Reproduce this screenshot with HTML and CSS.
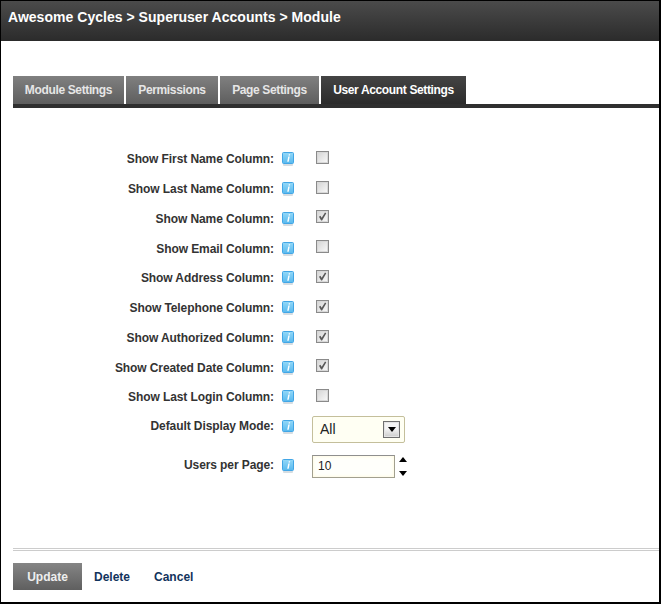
FILE: index.html
```html
<!DOCTYPE html>
<html lang="en">
<head>
<meta charset="utf-8">
<title>Module</title>
<link rel="stylesheet" href="styles.css">
</head>
<body>
<div class="frame">
  <svg width="0" height="0" class="defs">
    <defs>
      <linearGradient id="hg" x1="0" y1="0" x2="0" y2="1"><stop offset="0" stop-color="#93d8f8"/><stop offset="1" stop-color="#58b9ee"/></linearGradient>
      <symbol id="help" viewBox="0 0 12 14">
        <rect x="1" y="11.5" width="10" height="2.5" rx="1" fill="#d6dde2"/>
        <rect x=".5" y=".5" width="11" height="11" rx="1" fill="url(#hg)" stroke="#42a6e6"/>
        <path d="M6.8 2.2h1.4l-.3 1.3H6.5zM6.3 4.5h1.4l-1 5.2H5.2z" fill="#fff"/>
      </symbol>
      <symbol id="check" viewBox="0 0 11 11">
        <path d="M2 5.8l1.4-1 1.3 2L8 1.4l1.3.8-4.2 7.3H4.1z" fill="#585858"/>
      </symbol>
    </defs>
  </svg>
  <header class="top"><h1 class="crumb">Awesome Cycles &gt; Superuser Accounts &gt; Module</h1></header>
  <nav class="tabs">
    <a class="tab t1">Module Settings</a>
    <a class="tab t2">Permissions</a>
    <a class="tab t3">Page Settings</a>
    <a class="tab t4 active">User Account Settings</a>
  </nav>
  <main class="form">
    <div class="row"><label class="lbl">Show First Name Column:</label><svg class="help"><use href="#help"/></svg><span class="cb"></span></div>
    <div class="row"><label class="lbl">Show Last Name Column:</label><svg class="help"><use href="#help"/></svg><span class="cb"></span></div>
    <div class="row"><label class="lbl">Show Name Column:</label><svg class="help"><use href="#help"/></svg><span class="cb"><svg class="tick"><use href="#check"/></svg></span></div>
    <div class="row"><label class="lbl">Show Email Column:</label><svg class="help"><use href="#help"/></svg><span class="cb"></span></div>
    <div class="row"><label class="lbl">Show Address Column:</label><svg class="help"><use href="#help"/></svg><span class="cb"><svg class="tick"><use href="#check"/></svg></span></div>
    <div class="row"><label class="lbl">Show Telephone Column:</label><svg class="help"><use href="#help"/></svg><span class="cb"><svg class="tick"><use href="#check"/></svg></span></div>
    <div class="row"><label class="lbl">Show Authorized Column:</label><svg class="help"><use href="#help"/></svg><span class="cb"><svg class="tick"><use href="#check"/></svg></span></div>
    <div class="row"><label class="lbl">Show Created Date Column:</label><svg class="help"><use href="#help"/></svg><span class="cb"><svg class="tick"><use href="#check"/></svg></span></div>
    <div class="row"><label class="lbl">Show Last Login Column:</label><svg class="help"><use href="#help"/></svg><span class="cb"></span></div>
    <div class="row row-select"><label class="lbl">Default Display Mode:</label><svg class="help"><use href="#help"/></svg>
      <div class="select"><span class="sel-val">All</span><span class="sel-btn"><span class="arrow-down"></span></span></div>
    </div>
    <div class="row row-input"><label class="lbl">Users per Page:</label><svg class="help"><use href="#help"/></svg>
      <div class="num"><span class="num-val">10</span></div>
      <div class="spin"><span class="arrow-up"></span><span class="arrow-down"></span></div>
    </div>
  </main>
  <footer class="foot">
    <div class="rule"></div>
    <div class="actions">
      <a class="btn">Update</a>
      <a class="link l1">Delete</a>
      <a class="link l2">Cancel</a>
    </div>
  </footer>
</div>
</body>
</html>
```
FILE: styles.css
```css
* { box-sizing: border-box; }
html, body { margin: 0; padding: 0; height: 100%; background: #fff; overflow: hidden; }
body { font-family: "Liberation Sans", Arial, sans-serif; }
.defs { position: absolute; }
.frame {
  width: 661px; height: 604px;
  border: 1px solid #000; border-width: 1px 2px 2px 1px;
  display: flex; flex-direction: column;
}
.top {
  height: 40px; flex: none;
  background: linear-gradient(#4b4b4b, #2b2b2b);
  padding: 8px 0 0 7px;
}
.crumb { margin: 0; font-size: 14px; line-height: 17px; font-weight: bold; color: #fff; letter-spacing: .03px; }
.tabs {
  display: flex; gap: 2px;
  margin: 35px 0 0 12px; height: 32px; flex: none;
  border-bottom: 4px solid #2f2f2f;
}
.tab {
  height: 28px; padding-top: 6px;
  font-size: 12px; line-height: 16px; font-weight: bold; text-align: center;
  letter-spacing: -.36px;
  color: #e6e6e6;
  background: linear-gradient(#808080, #5e5e5e);
}
.t1 { width: 111px; }
.t2 { width: 92px; }
.t3 { width: 99px; }
.t4 { width: 145px; }
.tab.active { background: linear-gradient(#444, #2b2b2b); color: #fff; }
.form { padding-top: 36.25px; flex: 1; }
.row { display: flex; height: 29.766px; align-items: flex-start; }
.lbl {
  width: 273px; flex: none; text-align: right;
  font-size: 12px; line-height: 16px; font-weight: bold; color: #333;
  letter-spacing: -.09px;
  padding-top: 7px;
}
.help { width: 12px; height: 14px; margin: 8px 0 0 8px; flex: none; }
.cb {
  width: 13px; height: 13px; margin: 6.69px 0 0 22px; flex: none;
  border: 1px solid #8a8a8a;
  background: linear-gradient(135deg, #d4d4d4, #fafafa);
  box-shadow: inset 0 0 0 1px #d8d8d8;
  display: block;
}
.tick { width: 11px; height: 11px; display: block; }
.row-select { height: 44px; margin-top: -1.14px; }
.row-select .help { margin-top: 9px; }
.select {
  width: 93px; height: 27px; margin: 5px 0 0 18px;
  border: 1px solid #c4bf9b; border-radius: 2px;
  background: #fffff3;
  display: flex; align-items: center; justify-content: space-between;
  padding: 0 4px 0 7px;
}
.sel-val { font-size: 14px; color: #222; padding-bottom: 2px; }
.sel-btn {
  width: 17px; height: 17px; border: 1px solid #6f6f6f;
  box-shadow: inset 0 0 0 1px #e4e4e4;
  background: linear-gradient(#f4f4f4 45%, #cbcbcb);
  display: flex; justify-content: center; padding-top: 5px;
}
.arrow-down { width: 0; height: 0; border: 4px solid transparent; border-top: 5px solid #000; border-bottom: 0; }
.arrow-up { width: 0; height: 0; border: 4px solid transparent; border-bottom: 5px solid #000; border-top: 0; }
.row-input .lbl { padding-top: 2px; }
.row-input .help { margin-top: 4px; }
.num {
  width: 83px; height: 23px; margin: 0 0 0 18px;
  border: 1px solid #a2a08f; border-top-color: #8f8f8f;
  background: #fffffb;
  box-shadow: inset 0 0 3px 1px #fffbe4;
  padding: 3px 0 0 5px;
}
.num-val { font-size: 12px; line-height: 15px; display: block; color: #222; }
.spin { display: flex; flex-direction: column; gap: 9px; margin: 0 0 0 4px; width: 8px; height: 21px; padding-top: 2px; }
.foot { flex: none; padding: 0 0 12px 12px; }
.rule { height: 3px; border-top: 1px solid #ccc; border-bottom: 1px solid #ccc; }
.actions { display: flex; align-items: center; margin-top: 12px; height: 27px; }
.btn {
  width: 69px; height: 27px; padding-top: 6px;
  text-align: center; font-size: 12px; line-height: 16px; font-weight: bold; color: #eee;
  background: linear-gradient(#858585, #5f5f5f);
}
.link { font-size: 12px; line-height: 16px; font-weight: bold; color: #12335c; }
.l1 { margin-left: 12px; }
.l2 { margin-left: 24px; }
```
